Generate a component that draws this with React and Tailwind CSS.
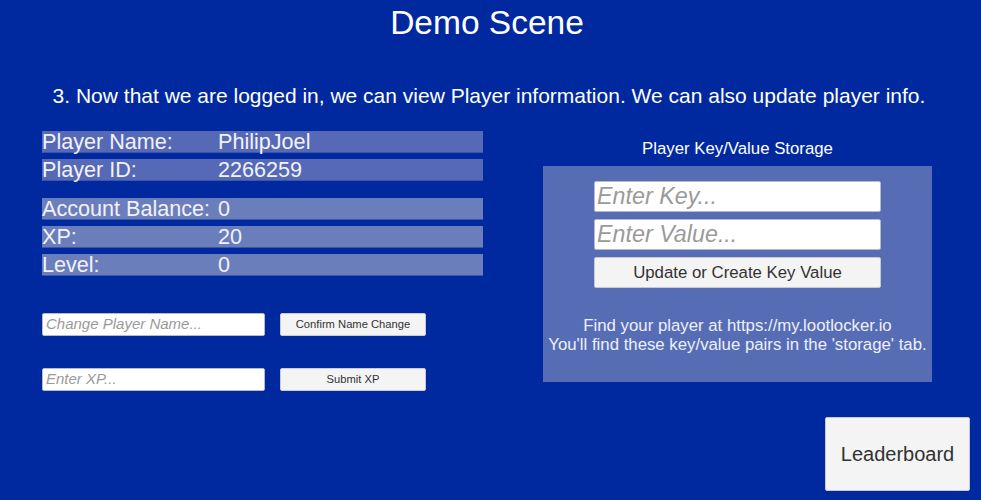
const ROWS_TOP = [
  { label: 'Player Name:', value: 'PhilipJoel' },
  { label: 'Player ID:', value: '2266259' },
];

const ROWS_STATS = [
  { label: 'Account Balance:', value: '0' },
  { label: 'XP:', value: '20' },
  { label: 'Level:', value: '0' },
];

function InfoRow({ label, value, light, className = '' }) {
  return (
    <div
      className={`flex items-center h-[22px] text-[21.6px] leading-[22px] whitespace-nowrap border-b border-[#3f55a8]
        ${light ? 'bg-[#6b7ebc]' : 'bg-[#5669b7]'} ${className}`}
    >
      <span className="w-[176px] flex-shrink-0">{label}</span>
      <span>{value}</span>
    </div>
  );
}

function TextField({ placeholder, className = '' }) {
  return (
    <div
      className={`bg-white border border-[#b9b9c4] rounded-[2px] flex items-center italic text-[#9a9a9a] whitespace-nowrap ${className}`}
    >
      {placeholder}
    </div>
  );
}

function Button({ children, className = '' }) {
  return (
    <div
      className={`bg-[#f4f4f4] border border-[#c8c8d0] rounded-[2px] flex items-center justify-center text-[#323232] whitespace-nowrap ${className}`}
    >
      {children}
    </div>
  );
}

export default function App() {
  return (
    <div
      className="w-[981px] h-[500px] bg-[#0029a0] text-[#f2f2f8] flex flex-col overflow-hidden"
      style={{ fontFamily: '"Liberation Sans", Arial, sans-serif' }}
    >
      {/* Title */}
      <div className="h-[46px] pr-[7px] flex items-center justify-center text-[33.5px] text-white">
        Demo Scene
      </div>

      {/* Instruction */}
      <div className="mt-[38px] pr-[3px] text-center text-[21px] leading-[24px] text-white">
        3. Now that we are logged in, we can view Player information. We can also update player info.
      </div>

      <div className="flex mt-[23px] pl-[42px]">
        {/* Left column */}
        <div className="w-[441px] flex flex-col">
          {ROWS_TOP.map((r, i) => (
            <InfoRow key={r.label} {...r} className={i ? 'mt-[6px]' : ''} />
          ))}
          {ROWS_STATS.map((r, i) => (
            <InfoRow key={r.label} {...r} light className={i ? 'mt-[6px]' : 'mt-[17px]'} />
          ))}

          <div className="flex gap-[15px] mt-[37px]">
            <TextField placeholder="Change Player Name..." className="w-[223px] h-[23px] pl-[3px] text-[15px]" />
            <Button className="w-[146px] h-[23px] text-[11.2px]">Confirm Name Change</Button>
          </div>
          <div className="flex gap-[15px] mt-[32px]">
            <TextField placeholder="Enter XP..." className="w-[223px] h-[23px] pl-[3px] text-[15px]" />
            <Button className="w-[146px] h-[23px] text-[11.2px]">Submit XP</Button>
          </div>
        </div>

        {/* Right column: key/value storage */}
        <div className="ml-[60px] w-[389px] flex flex-col">
          <div className="h-[35px] flex items-center justify-center text-[16.8px] text-white">
            Player Key/Value Storage
          </div>
          <div className="h-[216px] bg-[#566db6] flex flex-col items-center pt-[15px]">
            <TextField placeholder="Enter Key..." className="w-[287px] h-[31px] pl-[2px] text-[23.3px]" />
            <TextField placeholder="Enter Value..." className="w-[287px] h-[31px] pl-[2px] text-[23.3px] mt-[7px]" />
            <Button className="w-[287px] h-[31px] mt-[7px] text-[16.8px]">Update or Create Key Value</Button>
            <div className="mt-[28px] text-center text-[16.8px] leading-[19px] text-[#eef0f8]">
              <div>Find your player at https://my.lootlocker.io</div>
              <div>You'll find these key/value pairs in the 'storage' tab.</div>
            </div>
          </div>
        </div>
      </div>

      {/* Leaderboard */}
      <div className="mt-auto mb-[9px] flex justify-end pr-[11px]">
        <Button className="w-[145px] h-[74px] text-[20px] text-[#444]">Leaderboard</Button>
      </div>
    </div>
  );
}
